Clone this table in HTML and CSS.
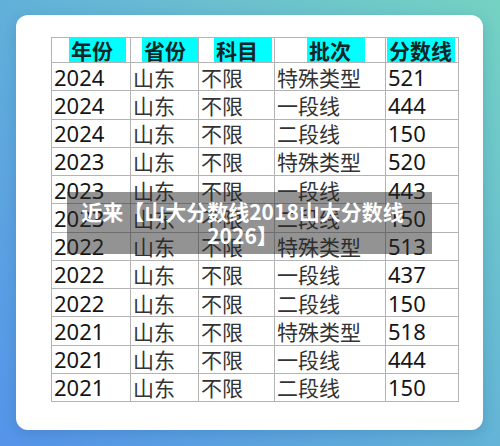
FILE: index.html
```html
<!DOCTYPE html>
<html lang="zh-CN">
<head>
<meta charset="utf-8">
<title>山大分数线</title>
<link rel="stylesheet" href="styles.css">
</head>
<body>
<div class="card">
  <table class="scores">
    <colgroup>
      <col class="w1"><col class="w2"><col class="w3"><col class="w4"><col class="w5">
    </colgroup>
    <thead>
      <tr>
        <th class="h1"><span class="hl">年份</span></th>
        <th class="h2"><span class="hl">省份</span></th>
        <th class="h3"><span class="hl">科目</span></th>
        <th class="h4"><span class="hl">批次</span></th>
        <th class="h5"><span class="hl">分数线</span></th>
      </tr>
    </thead>
    <tbody>
      <tr><td class="num">2024</td><td>山东</td><td>不限</td><td>特殊类型</td><td class="num">521</td></tr>
      <tr><td class="num">2024</td><td>山东</td><td>不限</td><td>一段线</td><td class="num">444</td></tr>
      <tr><td class="num">2024</td><td>山东</td><td>不限</td><td>二段线</td><td class="num">150</td></tr>
      <tr><td class="num">2023</td><td>山东</td><td>不限</td><td>特殊类型</td><td class="num">520</td></tr>
      <tr><td class="num">2023</td><td>山东</td><td>不限</td><td>一段线</td><td class="num">443</td></tr>
      <tr><td class="num">2023</td><td>山东</td><td>不限</td><td>二段线</td><td class="num">150</td></tr>
      <tr><td class="num">2022</td><td>山东</td><td>不限</td><td>特殊类型</td><td class="num">513</td></tr>
      <tr><td class="num">2022</td><td>山东</td><td>不限</td><td>一段线</td><td class="num">437</td></tr>
      <tr><td class="num">2022</td><td>山东</td><td>不限</td><td>二段线</td><td class="num">150</td></tr>
      <tr><td class="num">2021</td><td>山东</td><td>不限</td><td>特殊类型</td><td class="num">518</td></tr>
      <tr><td class="num">2021</td><td>山东</td><td>不限</td><td>一段线</td><td class="num">444</td></tr>
      <tr><td class="num">2021</td><td>山东</td><td>不限</td><td>二段线</td><td class="num">150</td></tr>
    </tbody>
  </table>
  <div class="caption">近来【山大分数线2018山大分数线2026】</div>
</div>
</body>
</html>
```
FILE: styles.css
```css
html, body {
  margin: 0;
  padding: 0;
}
body {
  width: 500px;
  height: 446px;
  box-sizing: border-box;
  padding: 15px 17px 16px 16px;
  background: linear-gradient(45deg, #5594ea 0%, #62b2d8 50%, #74d2c2 100%);
  font-family: "Noto Sans", "Noto Sans CJK SC", sans-serif;
  overflow: hidden;
}
.card {
  position: relative;
  height: 415px;
  box-sizing: border-box;
  padding: 22px 0 0 35px;
  background: #ffffff;
  border-radius: 12px;
  box-shadow: 0 4px 14px rgba(20, 60, 120, 0.18);
}
.scores {
  border-collapse: collapse;
  table-layout: fixed;
  width: 407px;
  border: 1px solid #b3b3b3;
}
.w1 { width: 79px; }
.w2 { width: 68px; }
.w3 { width: 76px; }
.w4 { width: 111px; }
.w5 { width: 73px; }
.scores th,
.scores td {
  border: 1px solid #b3b3b3;
  padding: 0 0 0 2px;
  text-align: left;
  vertical-align: middle;
  white-space: nowrap;
}
.scores thead tr { height: 25px; }
.scores tbody tr { height: 28.25px; }
.scores th {
  padding: 0;
  font-family: "Noto Sans CJK SC", sans-serif;
  font-size: 21px;
  font-weight: 700;
  color: #102626;
  line-height: 24px;
}
.hl {
  display: inline-block;
  height: 24px;
  line-height: 24px;
  background: #00ffff;
  padding-left: 2px;
  box-sizing: border-box;
  vertical-align: top;
}
.h1 { padding-left: 17px !important; }
.h1 .hl { width: 57px; }
.h2 { padding-left: 11px !important; }
.h2 .hl { width: 56px; }
.h3 { padding-left: 15px !important; }
.h3 .hl { width: 58px; }
.h4 { padding-left: 32px !important; }
.h4 .hl { width: 58px; }
.h5 { padding-left: 1px !important; }
.h5 .hl { width: 68px; }
.scores td {
  font-family: "Noto Sans CJK SC", sans-serif;
  font-size: 21px;
  color: #333333;
  line-height: 26px;
}
.scores td.num {
  font-family: "Noto Sans", "Open Sans", sans-serif;
  font-size: 22px;
  color: #151515;
}
.caption {
  position: absolute;
  left: 51px;
  top: 177px;
  width: 365px;
  height: 62px;
  box-sizing: border-box;
  padding: 7px 16px 0 2px;
  background: rgba(40, 40, 40, 0.5);
  color: #ffffff;
  font-family: "Noto Sans CJK SC", sans-serif;
  font-weight: 700;
  font-size: 21px;
  line-height: 24px;
  text-align: center;
}
```
